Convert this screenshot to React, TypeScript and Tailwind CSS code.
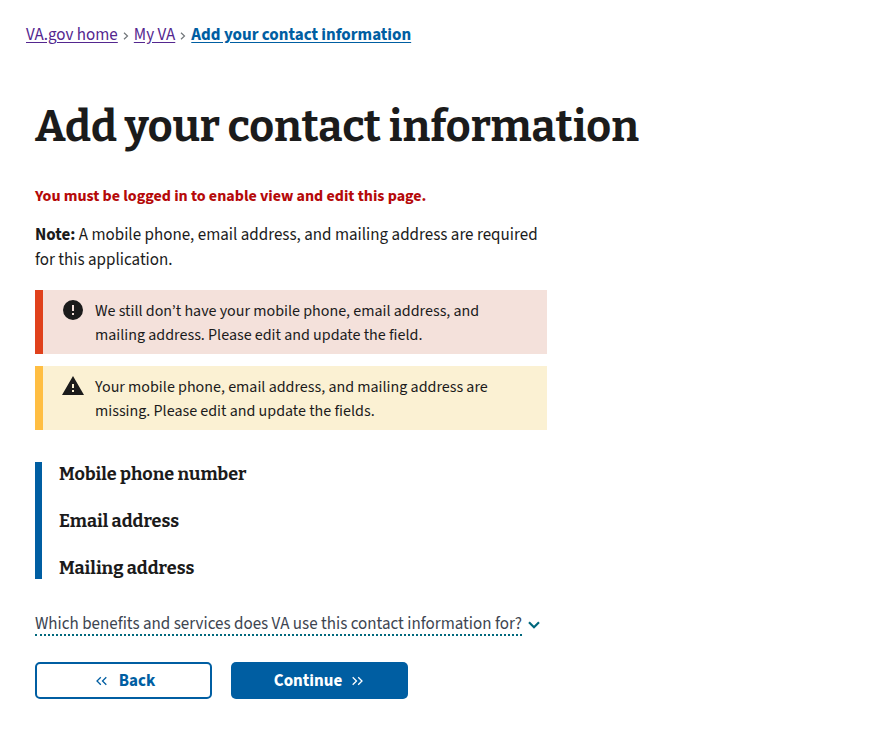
import type { ReactNode } from "react";

const headingFont =
  "font-['Bitter','DejaVu_Serif_Condensed','DejaVu_Serif',serif] font-bold";

function Separator() {
  return (
    <svg aria-hidden="true" viewBox="0 0 6 8" className="mx-[5px] h-2 w-[6px]" fill="none" stroke="#71767a" strokeWidth="1.2">
      <path d="M1 0.7 4.5 4 1 7.3" />
    </svg>
  );
}

function Alert({ tone, icon, children }: { tone: string; icon: ReactNode; children: ReactNode }) {
  return (
    <div role="alert" className={`flex max-w-[512px] border-l-8 pt-2 pr-5 pb-[7px] pl-[18px] ${tone}`}>
      <svg aria-hidden="true" viewBox="0 0 24 24" className="h-6 w-6 shrink-0" fill="#1b1b1b">
        {icon}
      </svg>
      <p className="ml-[10px] pt-px leading-6">{children}</p>
    </div>
  );
}

export default function App() {
  return (
    <div className="bg-white px-[26px] pt-[23px] pb-8 font-['Source_Sans_3','Source_Sans_Pro','Noto_Sans_CJK_KR',sans-serif] text-[17px] leading-[25px] text-[#1b1b1b]">
      <nav aria-label="Breadcrumb">
        <ol className="flex flex-wrap items-center">
          <li className="flex items-center">
            <a href="#home" className="text-[#54278f] underline underline-offset-2">VA.gov home</a>
            <Separator />
          </li>
          <li className="flex items-center">
            <a href="#my-va" className="text-[#54278f] underline underline-offset-2">My VA</a>
            <Separator />
          </li>
          <li>
            <a href="#contact" aria-current="page" className="font-bold text-[#005ea2] underline underline-offset-2">
              Add your contact information
            </a>
          </li>
        </ol>
      </nav>

      <main className="mt-[53px] px-[9px]">
        <h1 className={`${headingFont} text-[43px] leading-[52px]`}>Add your contact information</h1>
        <p className="mt-[31px] text-[16px] font-bold text-[#b50909]">You must be logged in to enable view and edit this page.</p>
        <p className="mt-[14px] max-w-[512px]">
          <strong>Note:</strong> A mobile phone, email address, and mailing address are required for this application.
        </p>

        <div className="mt-[17px] flex flex-col gap-3 text-[16px]">
          <Alert
            tone="border-[#e0411c] bg-[#f4e1db]"
            icon={<path d="M12 2a10 10 0 1 0 0 20 10 10 0 0 0 0-20Zm1 15h-2v-2h2v2Zm0-4h-2V7h2v6Z" />}
          >
            We still don’t have your mobile phone, email address, and mailing address. Please edit and update the field.
          </Alert>
          <Alert
            tone="border-[#ffbe42] bg-[#fbf1d3]"
            icon={<path d="M1 21h22L12 2 1 21Zm12-3h-2v-2h2v2Zm0-4h-2v-4h2v4Z" />}
          >
            Your mobile phone, email address, and mailing address are missing. Please edit and update the fields.
          </Alert>
        </div>

        <section className={`mt-8 flex flex-col gap-[26px] border-l-[7px] border-[#005ea2] pt-0.5 pl-[17px] ${headingFont} text-[18px] leading-[21px]`}>
          <h2>Mobile phone number</h2>
          <h2>Email address</h2>
          <h2>Mailing address</h2>
        </section>

        <button type="button" aria-expanded="false" className="mt-[35px] flex items-center text-left leading-5 text-[#3d4551]">
          <span className="border-b-2 border-dotted border-[#00687d]">
            Which benefits and services does VA use this contact information for?
          </span>
          <svg aria-hidden="true" viewBox="0 0 12 8" className="ml-[6px] h-2 w-3" fill="none" stroke="#00687d" strokeWidth="2.2">
            <path d="M1 1.2 6 6.2 11 1.2" />
          </svg>
        </button>

        <div className="mt-[26px] flex flex-wrap gap-[19px] font-bold">
          <button type="button" className="flex h-[37px] w-[177px] items-center justify-center gap-3 rounded-[5px] border-2 border-[#005ea2] bg-white pl-1 text-[#005ea2]">
            <svg aria-hidden="true" viewBox="0 0 11 10" className="h-[10px] w-[11px]" fill="none" stroke="currentColor" strokeWidth="1.3">
              <path d="M4.8 1.2 1 5l3.8 3.8M10.3 1.2 6.5 5l3.8 3.8" />
            </svg>
            <span className="pt-0.5">Back</span>
          </button>
          <button type="button" className="flex h-[37px] w-[177px] items-center justify-center gap-[10px] rounded-[5px] bg-[#005ea2] pr-0.5 text-white">
            <span className="pt-0.5">Continue</span>
            <svg aria-hidden="true" viewBox="0 0 11 10" className="h-[10px] w-[11px]" fill="none" stroke="currentColor" strokeWidth="1.3">
              <path d="M0.7 1.2 4.5 5 0.7 8.8M6.2 1.2 10 5 6.2 8.8" />
            </svg>
          </button>
        </div>
      </main>
    </div>
  );
}
